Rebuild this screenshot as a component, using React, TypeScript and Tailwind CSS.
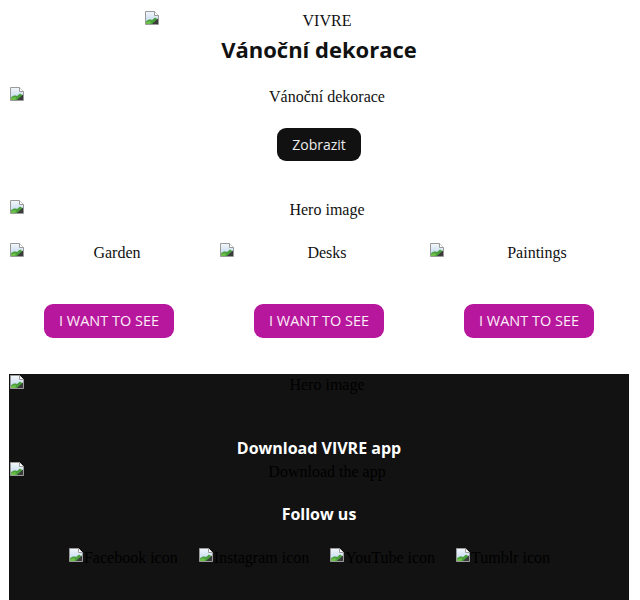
import type { ReactNode } from "react";

const serif = { fontFamily: '"Liberation Serif", "Times New Roman", serif' };
const sans = { fontFamily: '"Open Sans", "Noto Sans", sans-serif' };

function BrokenIcon() {
  return (
    <svg width="16" height="16" viewBox="0 0 16 16" className="shrink-0">
      <defs>
        <linearGradient id="sky" x1="0" y1="0" x2="0" y2="1">
          <stop offset="0" stopColor="#f4f7fb" />
          <stop offset="1" stopColor="#b9d3ee" />
        </linearGradient>
      </defs>
      <path d="M1.5 1.5H10.5L14.5 5.5V14.5H1.5Z" fill="url(#sky)" stroke="#9a9a9a" />
      <path d="M10.5 1.5V5.5H14.5" fill="#fff" stroke="#9a9a9a" />
      <path d="M2 14V11.5C4 9.5 6 9 8 10L11 7.5L14 9.5V14Z" fill="#4a9e3c" />
      <path d="M8 14L14 8.5V14Z" fill="#3b3b3b" />
      <path d="M2 14V12.5C4 11 6 11 7.5 12L6 14Z" fill="#6cc04a" />
    </svg>
  );
}

// broken image: icon top-left, alt text centered in the rest
function ImgBox({ alt, className = "", dark = false }: { alt: string; className?: string; dark?: boolean }) {
  return (
    <div className={`flex items-start h-[20px] ${className}`}>
      <BrokenIcon />
      <span
        className={`flex-1 text-center text-[16px] leading-[18px] pt-[2px] ${dark ? "text-black" : "text-[#111]"}`}
        style={serif}
      >
        {alt}
      </span>
    </div>
  );
}

function SocialIcon({ alt }: { alt: string }) {
  return (
    <div className="flex items-start">
      <BrokenIcon />
      <span className="text-[16px] leading-[18px] pt-[2px] text-black" style={serif}>
        {alt}
      </span>
    </div>
  );
}

function PinkButton({ children }: { children: ReactNode }) {
  return (
    <button
      className="w-[130px] h-[34px] rounded-[9px] bg-[#b7179c] text-[14.5px] text-[#fbeef8]"
      style={sans}
    >
      {children}
    </button>
  );
}

export default function App() {
  const categories = ["Garden", "Desks", "Paintings"];

  return (
    <div className="bg-white min-h-[600px] overflow-hidden">
      <div className="ml-[9px] w-[620px]">
        {/* Logo */}
        <div className="pt-[10px] flex justify-center">
          <ImgBox alt="VIVRE" className="w-[350px]" />
        </div>

        <h1 className="mt-[4px] text-center text-[22px] leading-[30px] font-bold text-[#111]" style={sans}>
          Vánoční dekorace
        </h1>

        <ImgBox alt="Vánoční dekorace" className="mt-[22px]" />

        <div className="mt-[22px] flex justify-center">
          <button
            className="h-[33px] px-[15px] rounded-[9px] bg-[#111] text-[14px] text-[#ececec]"
            style={sans}
          >
            Zobrazit
          </button>
        </div>

        <ImgBox alt="Hero image" className="mt-[38px]" />

        {/* Categories */}
        <div className="mt-[23px] grid grid-cols-3 gap-[10px]">
          {categories.map((c) => (
            <ImgBox key={c} alt={c} />
          ))}
        </div>

        <div className="mt-[42px] grid grid-cols-3 gap-[10px]">
          {categories.map((c) => (
            <div key={c} className="flex justify-center">
              <PinkButton>I WANT TO SEE</PinkButton>
            </div>
          ))}
        </div>

        {/* Footer */}
        <div className="mt-[36px] bg-[#121212] h-[240px]">
          <ImgBox alt="Hero image" dark />

          <h2 className="mt-[42px] text-center text-[16px] leading-[24px] font-bold text-white" style={sans}>
            Download VIVRE app
          </h2>

          <ImgBox alt="Download the app" dark className="mt-[1px]" />

          <h2 className="mt-[21px] text-center text-[16px] leading-[24px] font-bold text-white" style={sans}>
            Follow us
          </h2>

          <div className="mt-[21px] flex justify-center gap-[20px] pr-[20px]">
            <SocialIcon alt="Facebook icon" />
            <SocialIcon alt="Instagram icon" />
            <SocialIcon alt="YouTube icon" />
            <SocialIcon alt="Tumblr icon" />
          </div>
        </div>
      </div>
    </div>
  );
}
